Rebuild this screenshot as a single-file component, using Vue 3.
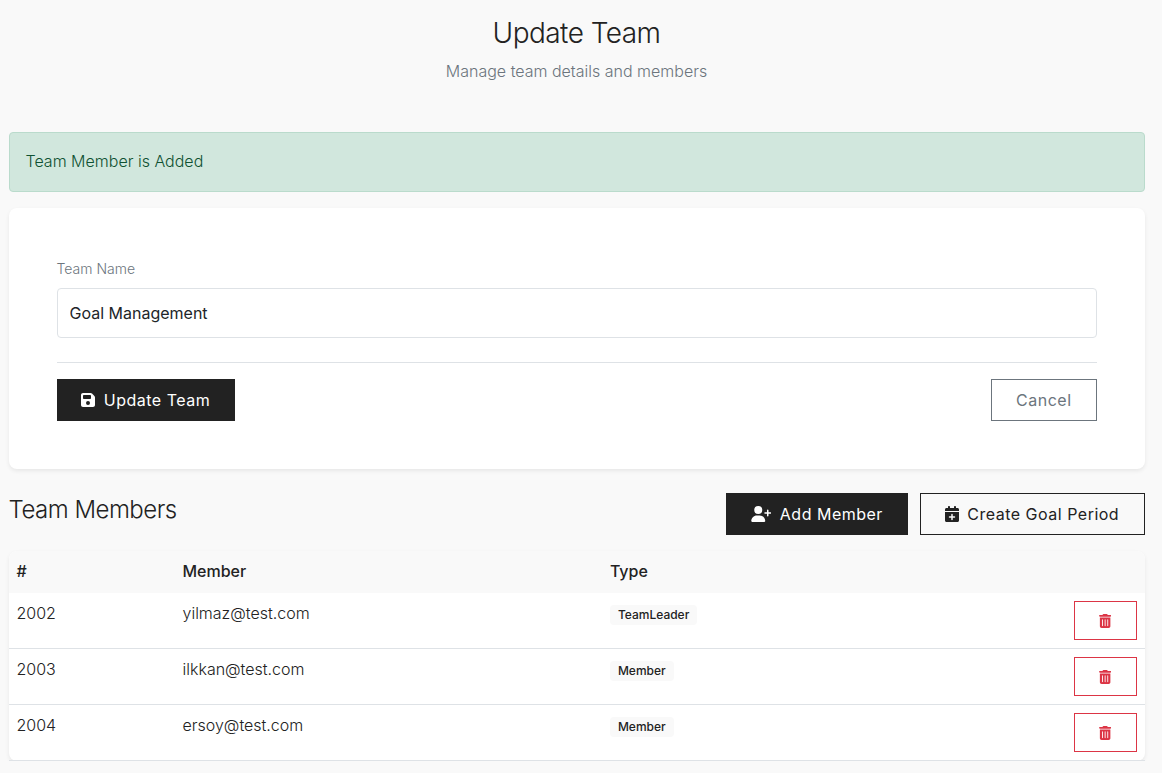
<script setup>
const members = [
  { id: 2002, email: 'yilmaz@test.com', type: 'TeamLeader' },
  { id: 2003, email: 'ilkkan@test.com', type: 'Member' },
  { id: 2004, email: 'ersoy@test.com', type: 'Member' },
]
</script>

<template>
  <main class="page">
    <header class="head">
      <h2>Update Team</h2>
      <p>Manage team details and members</p>
    </header>

    <div class="alert">Team Member is Added</div>

    <section class="card">
      <label for="team-name">Team Name</label>
      <input id="team-name" type="text" value="Goal Management" />
      <div class="actions">
        <button class="btn dark update">
          <svg class="i14" viewBox="0 0 448 512"><path d="M64 32C28.7 32 0 60.7 0 96V416c0 35.3 28.7 64 64 64H384c35.3 0 64-28.7 64-64V173.3c0-17-6.7-33.3-18.7-45.3L352 50.7C340 38.7 323.7 32 306.7 32H64zm0 96c0-17.7 14.3-32 32-32H288c17.7 0 32 14.3 32 32v64c0 17.7-14.3 32-32 32H96c-17.7 0-32-14.3-32-32V128zM224 288a64 64 0 1 1 0 128 64 64 0 1 1 0-128z" /></svg>
          <span>Update Team</span>
        </button>
        <button class="btn gray"><span>Cancel</span></button>
      </div>
    </section>

    <div class="bar">
      <h4>Team Members</h4>
      <div class="group">
        <button class="btn dark add">
          <svg class="i20" viewBox="0 0 640 512"><path d="M96 128a128 128 0 1 1 256 0A128 128 0 1 1 96 128zM0 482.3C0 383.8 79.8 304 178.3 304h91.4C368.2 304 448 383.8 448 482.3c0 16.4-13.3 29.7-29.7 29.7H29.7C13.3 512 0 498.7 0 482.3zM504 312V248H440c-13.3 0-24-10.7-24-24s10.7-24 24-24h64V136c0-13.3 10.7-24 24-24s24 10.7 24 24v64h64c13.3 0 24 10.7 24 24s-10.7 24-24 24H552v64c0 13.3-10.7 24-24 24s-24-10.7-24-24z" /></svg>
          <span>Add Member</span>
        </button>
        <button class="btn outline">
          <svg class="i14" viewBox="0 0 448 512"><path d="M96 32V64H48C21.5 64 0 85.5 0 112v48H448V112c0-26.5-21.5-48-48-48H352V32c0-17.7-14.3-32-32-32s-32 14.3-32 32V64H160V32c0-17.7-14.3-32-32-32S96 14.3 96 32zM448 192H0V464c0 26.5 21.5 48 48 48H400c26.5 0 48-21.5 48-48V192zM224 248c13.3 0 24 10.7 24 24v56h56c13.3 0 24 10.7 24 24s-10.7 24-24 24H248v56c0 13.3-10.7 24-24 24s-24-10.7-24-24V376H144c-13.3 0-24-10.7-24-24s10.7-24 24-24h56V272c0-13.3 10.7-24 24-24z" /></svg>
          <span>Create Goal Period</span>
        </button>
      </div>
    </div>

    <table>
      <thead>
        <tr><th class="c1">#</th><th class="c2">Member</th><th>Type</th><th class="c4"></th></tr>
      </thead>
      <tbody>
        <tr v-for="m in members" :key="m.id">
          <td>{{ m.id }}</td>
          <td>{{ m.email }}</td>
          <td><span class="badge">{{ m.type }}</span></td>
          <td class="end">
            <button class="del" aria-label="Remove">
              <svg viewBox="0 0 448 512"><path d="M135.2 17.7C140.6 6.8 151.7 0 163.8 0H284.2c12.1 0 23.2 6.8 28.6 17.7L320 32h96c17.7 0 32 14.3 32 32s-14.3 32-32 32H32C14.3 96 0 81.7 0 64S14.3 32 32 32h96l7.2-14.3zM32 128H416V448c0 35.3-28.7 64-64 64H96c-35.3 0-64-28.7-64-64V128zm96 64c-8.8 0-16 7.2-16 16V432c0 8.8 7.2 16 16 16s16-7.2 16-16V208c0-8.8-7.2-16-16-16zm96 0c-8.8 0-16 7.2-16 16V432c0 8.8 7.2 16 16 16s16-7.2 16-16V208c0-8.8-7.2-16-16-16zm96 0c-8.8 0-16 7.2-16 16V432c0 8.8 7.2 16 16 16s16-7.2 16-16V208c0-8.8-7.2-16-16-16z" /></svg>
            </button>
          </td>
        </tr>
      </tbody>
    </table>
  </main>
</template>

<style>
html, body { background: #f9f9f9; }
body { margin: 0; overflow: hidden; }
</style>

<style scoped>
* { box-sizing: border-box; }
.page {
  width: 1136px;
  margin-left: 8.5px;
  padding-top: 16px;
  font: 300 16px/24px Inter, sans-serif;
  color: #222;
}
.head { text-align: center; height: 116px; }
h2 { margin: 0 0 9px; font-size: 28px; line-height: 34px; font-weight: 300; letter-spacing: -0.55px; }
p { margin: 0; color: #6c757d; }
.alert {
  height: 60px;
  padding: 16px 16px;
  border: 1px solid #badbcc;
  border-radius: 4px;
  background: #d1e7dd;
  color: #0f5132;
}
.card {
  height: 261px;
  margin-top: 16px;
  padding: 48px;
  background: #fff;
  border-radius: 8px;
  box-shadow: 0 2px 4px rgba(0, 0, 0, 0.075);
}
label { display: block; height: 32px; padding-top: 2px; font-size: 14px; line-height: 22px; color: #6c757d; }
input {
  display: block;
  width: 100%;
  height: 50px;
  padding: 12px;
  border: 1px solid #dee2e6;
  border-radius: 4px;
  background: #fff;
  color: #212529;
  font: 400 16px/24px Inter, sans-serif;
}
.actions {
  display: flex;
  justify-content: space-between;
  margin-top: 24px;
  padding-top: 16px;
  border-top: 1px solid #dee2e6;
}
.btn {
  display: flex;
  align-items: center;
  gap: 8.8px;
  height: 42px;
  padding: 0 0 0 24px;
  border: 1px solid #222;
  background: transparent;
  color: #222;
  font: 400 16px/24px Inter, sans-serif;
  letter-spacing: 0.5px;
  white-space: nowrap;
}
.btn svg { height: 16px; fill: currentColor; flex: none; }
.i14 { width: 14px; }
.i20 { width: 20.5px; }
.dark { background: #222; color: #fff; }
.update { width: 178px; padding-left: 23.5px; }
.add { width: 182px; }
.outline { width: 225px; }
.gray { width: 106px; padding-left: 24.6px; border-color: #6c757d; color: #6c757d; }
.bar { display: flex; justify-content: space-between; margin-top: 24px; height: 58px; }
.group { display: flex; gap: 12px; }
h4 { margin: 0; font-size: 24px; line-height: 33px; font-weight: 300; letter-spacing: -0.5px; }
table {
  width: 100%;
  table-layout: fixed;
  border-spacing: 0;
  background: #fff;
  border-radius: 8px;
  box-shadow: 0 2px 4px rgba(0, 0, 0, 0.075);
}
th { height: 42px; padding: 0 8px 2px; text-align: left; font-weight: 500; background: #f9f9f9; }
th:first-child { border-top-left-radius: 8px; }
th:last-child { border-top-right-radius: 8px; }
.c1 { width: 166px; }
.c2 { width: 427.4px; }
.c4 { width: 100px; }
td { height: 56px; padding: 8px 8px 0; vertical-align: top; border-bottom: 1px solid #dee2e6; }
.badge {
  display: inline-block;
  padding: 4px 8px;
  border-radius: 4px;
  background: #f9f9f9;
  font-size: 12px;
  line-height: 12px;
  font-weight: 500;
}
.del {
  display: flex;
  align-items: center;
  justify-content: center;
  width: 63px;
  height: 39px;
  margin-left: auto;
  padding: 0;
  border: 1px solid #dc3545;
  background: transparent;
  color: #dc3545;
}
.del svg { width: 12.25px; height: 14px; fill: currentColor; }
</style>
